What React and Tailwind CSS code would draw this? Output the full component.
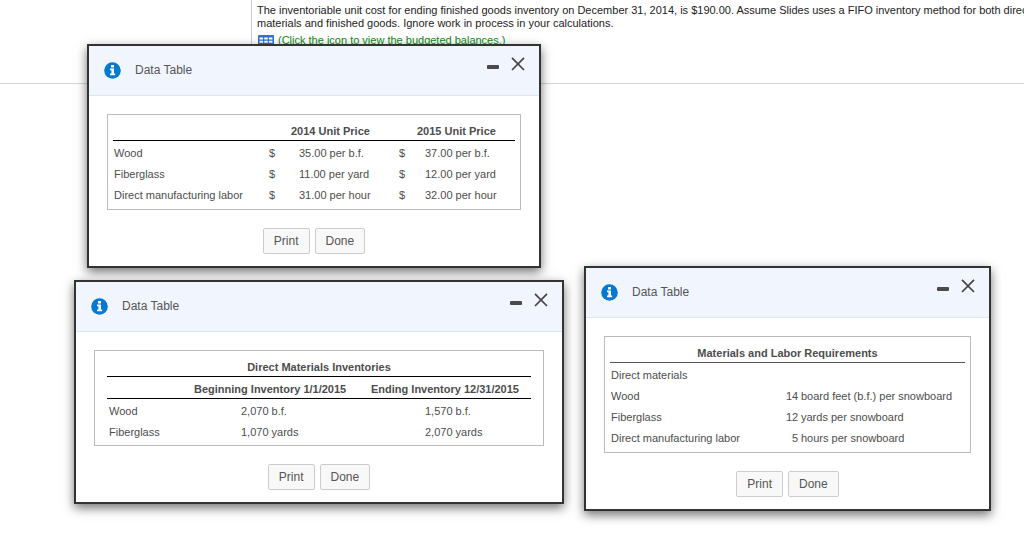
import { useState } from 'react';

function InfoIcon() {
  return (
    <svg width="17" height="17" viewBox="0 0 17 17" aria-hidden="true">
      <circle cx="8.5" cy="8.5" r="8.3" fill="#0379d0" />
      <path d="M7 3h3v2.4H7zM6 6.6h4v5h1.2V13.2H6v-1.6h1.4V8.2H6z" fill="#fff" />
    </svg>
  );
}

function GridIcon() {
  return (
    <svg width="16" height="13" viewBox="0 0 16 13" aria-hidden="true">
      <rect y="1" width="16" height="12" rx="1" fill="#2a72d4" />
      <path
        d="M1.5 3.5h3.6v2H1.5zM6.2 3.5h3.6v2H6.2zM10.9 3.5h3.6v2h-3.6zM1.5 6.7h3.6v2H1.5zM6.2 6.7h3.6v2H6.2zM10.9 6.7h3.6v2h-3.6zM1.5 9.9h3.6v2H1.5zM6.2 9.9h3.6v2H6.2zM10.9 9.9h3.6v2h-3.6z"
        fill="#fff"
      />
    </svg>
  );
}

function Dialog({ place, children }) {
  const [open, setOpen] = useState(true);
  const [collapsed, setCollapsed] = useState(false);

  if (!open) return null;

  return (
    <section className={`absolute border-2 border-[#333] bg-white shadow-[0_4px_10px_rgba(0,0,0,0.55)] ${place}`}>
      <header className="flex h-[50px] items-center border-b border-[#d6e8f8] bg-[#f1f6fe] pr-3.5 pl-[15px]">
        <InfoIcon />
        <h2 className="ml-3.5 pb-px text-xs text-[#555]">Data Table</h2>
        <div className="ml-auto flex gap-3 self-start pt-[11px]">
          <button type="button" aria-label="Minimize" onClick={() => setCollapsed(!collapsed)}>
            <svg width="12" height="14" viewBox="0 0 12 14">
              <rect y="8" width="12" height="4" rx="1" fill="#4a4a4a" />
            </svg>
          </button>
          <button type="button" aria-label="Close" onClick={() => setOpen(false)}>
            <svg width="14" height="14" viewBox="0 0 14 14">
              <path d="M1 .8 13 13M13 .8 1 13" stroke="#444" strokeWidth="1.7" />
            </svg>
          </button>
        </div>
      </header>

      {!collapsed && (
        <div className="px-[18px] pt-[18px] pb-3">
          {children}
          <div className="mt-[18px] flex justify-center gap-[5px]">
            <DialogButton onClick={() => window.print()}>Print</DialogButton>
            <DialogButton onClick={() => setOpen(false)}>Done</DialogButton>
          </div>
        </div>
      )}
    </section>
  );
}

function DialogButton({ onClick, children }) {
  return (
    <button
      type="button" onClick={onClick}
      className="h-[26px] rounded-xs border border-[#ccc] bg-[#f8f8f8] px-2.5 text-xs text-[#555]"
    >
      {children}
    </button>
  );
}

const boxClass   = 'border border-[#bbb] pt-1';
const tableClass = 'w-full table-fixed border-separate border-spacing-0 text-left text-[11px] leading-[17px] text-[#4d4d4d] [&_td]:pt-1 [&_th]:pt-1';
const lineClass  = '[&_th]:border-b [&_th]:border-black';

const prices = [
  { name: 'Wood',                       y2014: '35.00 per b.f.',  y2015: '37.00 per b.f.' },
  { name: 'Fiberglass',                 y2014: '11.00 per yard',  y2015: '12.00 per yard' },
  { name: 'Direct manufacturing labor', y2014: '31.00 per hour',  y2015: '32.00 per hour' },
];

const inventories = [
  { name: 'Wood',       beginning: '2,070 b.f.',  ending: '1,570 b.f.' },
  { name: 'Fiberglass', beginning: '1,070 yards', ending: '2,070 yards' },
];

const requirements = [
  { name: 'Direct materials' },
  { name: 'Wood',                       qty: '14', unit: 'board feet (b.f.) per snowboard' },
  { name: 'Fiberglass',                 qty: '12', unit: 'yards per snowboard' },
  { name: 'Direct manufacturing labor', qty: '5',  unit: 'hours per snowboard' },
];

function PriceTable() {
  return (
    <div className={`${boxClass} px-[5px] pb-[5px]`}>
      <table className={tableClass}>
        <colgroup>
          <col className="w-[156px]" />
          <col className="w-[22px]" />
          <col className="w-[108px]" />
          <col className="w-[18px]" />
          <col />
        </colgroup>
        <thead className={lineClass}>
          <tr>
            <th></th>
            <th></th>
            <th>2014 Unit Price</th>
            <th></th>
            <th>2015 Unit Price</th>
          </tr>
        </thead>
        <tbody>
          {prices.map(row => (
            <tr key={row.name}>
              <td className="pl-px">{row.name}</td>
              <td>$</td>
              <td className="pl-2">{row.y2014}</td>
              <td>$</td>
              <td className="pl-2">{row.y2015}</td>
            </tr>
          ))}
        </tbody>
      </table>
    </div>
  );
}

function InventoryTable() {
  return (
    <div className={`${boxClass} px-3 pb-1`}>
      <table className={tableClass}>
        <colgroup>
          <col className="w-[87px]" />
          <col className="w-[177px]" />
          <col />
        </colgroup>
        <thead className={lineClass}>
          <tr>
            <th colSpan={3} className="text-center">Direct Materials Inventories</th>
          </tr>
          <tr>
            <th></th>
            <th>Beginning Inventory 1/1/2015</th>
            <th>Ending Inventory 12/31/2015</th>
          </tr>
        </thead>
        <tbody>
          {inventories.map(row => (
            <tr key={row.name}>
              <td className="pl-0.5">{row.name}</td>
              <td className="pl-[47px]">{row.beginning}</td>
              <td className="pl-[54px]">{row.ending}</td>
            </tr>
          ))}
        </tbody>
      </table>
    </div>
  );
}

function RequirementsTable() {
  return (
    <div className={`${boxClass} px-[5px] pb-[5px]`}>
      <table className={tableClass}>
        <colgroup>
          <col className="w-[176px]" />
          <col />
        </colgroup>
        <thead className="[&_th]:border-b [&_th]:border-[#555]">
          <tr>
            <th colSpan={2} className="text-center">Materials and Labor Requirements</th>
          </tr>
        </thead>
        <tbody>
          {requirements.map(row => (
            <tr key={row.name}>
              <td className="pl-px">{row.name}</td>
              <td>
                {row.qty && (
                  <div className="flex gap-[3px] whitespace-nowrap">
                    <span className="w-3 text-right">{row.qty}</span>
                    <span>{row.unit}</span>
                  </div>
                )}
              </td>
            </tr>
          ))}
        </tbody>
      </table>
    </div>
  );
}

export default function App() {
  return (
    <main className="relative min-h-screen overflow-hidden bg-white font-['Liberation_Sans',Arial,sans-serif]">
      <div className="flex h-[84px] border-b border-[#d3d5dc]">
        <div className="w-[252px] shrink-0 border-r border-[#c8cad0]"></div>
        <div className="pt-1 pl-[5px] text-[11px] leading-[13px] whitespace-nowrap text-[#222]">
          <p>
            The inventoriable unit cost for ending finished goods inventory on December 31, 2014, is $190.00. Assume Slides uses a FIFO inventory method for both direct
            <br />
            materials and finished goods. Ignore work in process in your calculations.
          </p>
          <a href="#balances" className="mt-1 flex items-center gap-1 pl-px text-[#118a11]">
            <GridIcon />
            (Click the icon to view the budgeted balances.)
          </a>
        </div>
      </div>

      <Dialog place="left-[87px] top-[44px] w-[454px]">
        <PriceTable />
      </Dialog>
      <Dialog place="left-[74px] top-[280px] w-[490px]">
        <InventoryTable />
      </Dialog>
      <Dialog place="left-[584px] top-[266px] w-[407px]">
        <RequirementsTable />
      </Dialog>
    </main>
  );
}
